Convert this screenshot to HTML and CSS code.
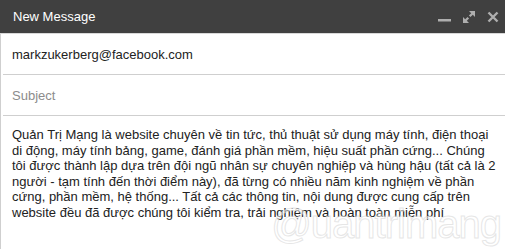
FILE: index.html
```html
<!DOCTYPE html>
<html>
<head>
<meta charset="utf-8">
<link rel="stylesheet" href="styles.css">
</head>
<body>
<div class="compose">
  <div class="header">
    <span class="title">New Message</span>
    <div class="controls">
      <svg class="ic" width="14" height="14" viewBox="0 0 14 14"><rect x="0" y="9" width="13" height="2.5" fill="#aeaeae"/></svg>
      <svg class="ic" width="14" height="14" viewBox="0 0 14 14"><g fill="#aeaeae"><path d="M7 1h6v6l-2.2-2.2-2.3 2.3-1.6-1.6 2.3-2.3z"/><path d="M1 13V7l2.2 2.2 2.3-2.3 1.6 1.6-2.3 2.3L7 13z"/></g></svg>
      <svg class="ic" width="14" height="14" viewBox="0 0 14 14"><path d="M2.5 2.5l9 9M11.5 2.5l-9 9" stroke="#aeaeae" stroke-width="2.4"/></svg>
    </div>
  </div>
  <div class="panel">
    <div class="row">markzukerberg@facebook.com</div>
    <div class="row placeholder">Subject</div>
    <div class="body">Quản Trị Mạng là website chuyên về tin tức, thủ thuật sử dụng máy tính, điện thoại<br>di động, máy tính bảng, game, đánh giá phần mềm, hiệu suất phần cứng... Chúng<br>tôi được thành lập dựa trên đội ngũ nhân sự chuyên nghiệp và hùng hậu (tất cả là 2<br>người - tạm tính đến thời điểm này), đã từng có nhiều năm kinh nghiệm về phần<br>cứng, phần mềm, hệ thống... Tất cả các thông tin, nội dung được cung cấp trên<br>website đều đã được chúng tôi kiểm tra, trải nghiệm và hoàn toàn miễn phí</div>
    <div class="watermark">@uantrimang</div>
  </div>
</div>
</body>
</html>
```
FILE: styles.css
```css
html, body {
  margin: 0;
  padding: 0;
  background: #fff;
  width: 505px;
  height: 249px;
  overflow: hidden;
}
.compose {
  font-family: "Liberation Sans", Arial, sans-serif;
  width: 505px;
}
.header {
  height: 34px;
  background: #404040;
  display: flex;
  align-items: center;
  justify-content: space-between;
  padding: 0 5px 0 13px;
  box-sizing: border-box;
  border-bottom: 1px solid #d8d8d8;
}
.title {
  color: #fff;
  font-size: 13px;
  margin-top: -1px;
}
.controls {
  display: flex;
  gap: 10px;
  align-items: center;
}
.ic { display: block; }
.panel {
  position: relative;
  border-left: 1px solid #cfcfcf;
  height: 215px;
}
.row {
  height: 41px;
  box-sizing: border-box;
  margin-left: 2px;
  padding-left: 9px;
  border-bottom: 1px solid #cfcfcf;
  display: flex;
  align-items: center;
  font-size: 13px;
  color: #222;
}
.row.placeholder {
  color: #8c8c8c;
  height: 41px;
}
.body {
  padding: 11px 0 0 11px;
  font-size: 13px;
  line-height: 15.6px;
  color: #222;
  white-space: nowrap;
}
.watermark {
  position: absolute;
  right: 4px;
  bottom: 2px;
  font-family: "Liberation Sans", Arial, sans-serif;
  font-size: 40px;
  letter-spacing: -1px;
  color: rgba(255,255,255,0.5);
  -webkit-text-stroke: 1px rgba(205,205,205,0.5);
  pointer-events: none;
}
```
